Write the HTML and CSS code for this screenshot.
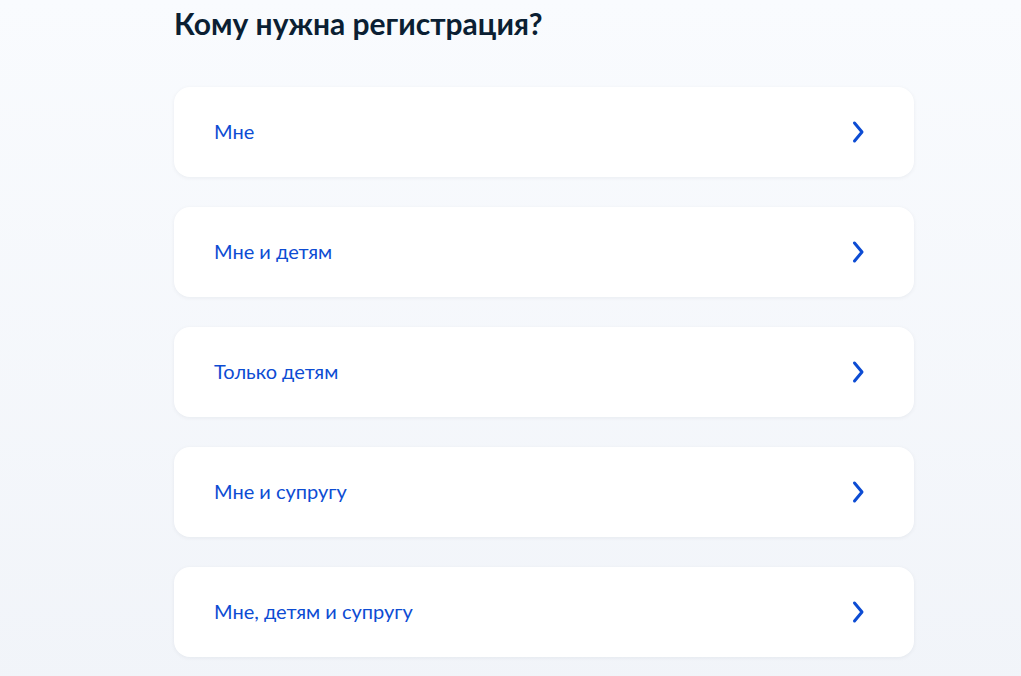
FILE: index.html
```html
<!DOCTYPE html>
<html lang="ru">
<head>
    <meta charset="UTF-8">
    <meta name="viewport" content="width=device-width, initial-scale=1.0">
    <title>Регистрация</title>
    <link rel="stylesheet" href="styles.css">
</head>
<body>
    <main class="page">
        <h2 class="title">Кому нужна регистрация?</h2>

        <div class="choices">
            <!-- варианты -->
            <a class="choice" href="#">
                <span>Мне</span>
                <svg class="arrow" width="24" height="24" viewBox="0 0 24 24"><path d="M8.5 3 L16 12 L8.5 21" fill="none" stroke="currentColor" stroke-width="3" stroke-linecap="round" stroke-linejoin="round"/></svg>
            </a>
            <a class="choice" href="#">
                <span>Мне и детям</span>
                <svg class="arrow" width="24" height="24" viewBox="0 0 24 24"><path d="M8.5 3 L16 12 L8.5 21" fill="none" stroke="currentColor" stroke-width="3" stroke-linecap="round" stroke-linejoin="round"/></svg>
            </a>
            <a class="choice" href="#">
                <span>Только детям</span>
                <svg class="arrow" width="24" height="24" viewBox="0 0 24 24"><path d="M8.5 3 L16 12 L8.5 21" fill="none" stroke="currentColor" stroke-width="3" stroke-linecap="round" stroke-linejoin="round"/></svg>
            </a>
            <a class="choice" href="#">
                <span>Мне и супругу</span>
                <svg class="arrow" width="24" height="24" viewBox="0 0 24 24"><path d="M8.5 3 L16 12 L8.5 21" fill="none" stroke="currentColor" stroke-width="3" stroke-linecap="round" stroke-linejoin="round"/></svg>
            </a>
            <a class="choice" href="#">
                <span>Мне, детям и супругу</span>
                <svg class="arrow" width="24" height="24" viewBox="0 0 24 24"><path d="M8.5 3 L16 12 L8.5 21" fill="none" stroke="currentColor" stroke-width="3" stroke-linecap="round" stroke-linejoin="round"/></svg>
            </a>
        </div>
    </main>
</body>
</html>
```

FILE: styles.css
```css
body {
    font-family: Lato, "Open Sans", sans-serif;
    background: linear-gradient(180deg, #f9fbfe 0%, #f1f4f9 100%);
    margin: 0;
    padding: 0;
    min-height: 676px;
}

.page {
    width: 740px;
    padding: 5px 0 40px 174px;
}

.title {
    font-size: 30px;
    line-height: 36px;
    font-weight: 700;
    color: #0b1f33;
    margin: 0 0 46px 0;
}

.choices {
    display: flex;
    flex-direction: column;
    gap: 30px;
}

.choice {
    display: flex;
    align-items: center;
    justify-content: space-between;
    height: 90px;
    padding: 0 44px 0 40px;
    background-color: #fff;
    border-radius: 16px;
    box-shadow: 0 1px 4px rgba(11, 31, 51, 0.06);
    color: #0d4cd3;
    font-size: 20px;
    text-decoration: none;
}

.choice span {
    margin-top: -2px;
}

.arrow {
    color: #0d4cd3;
}
```
